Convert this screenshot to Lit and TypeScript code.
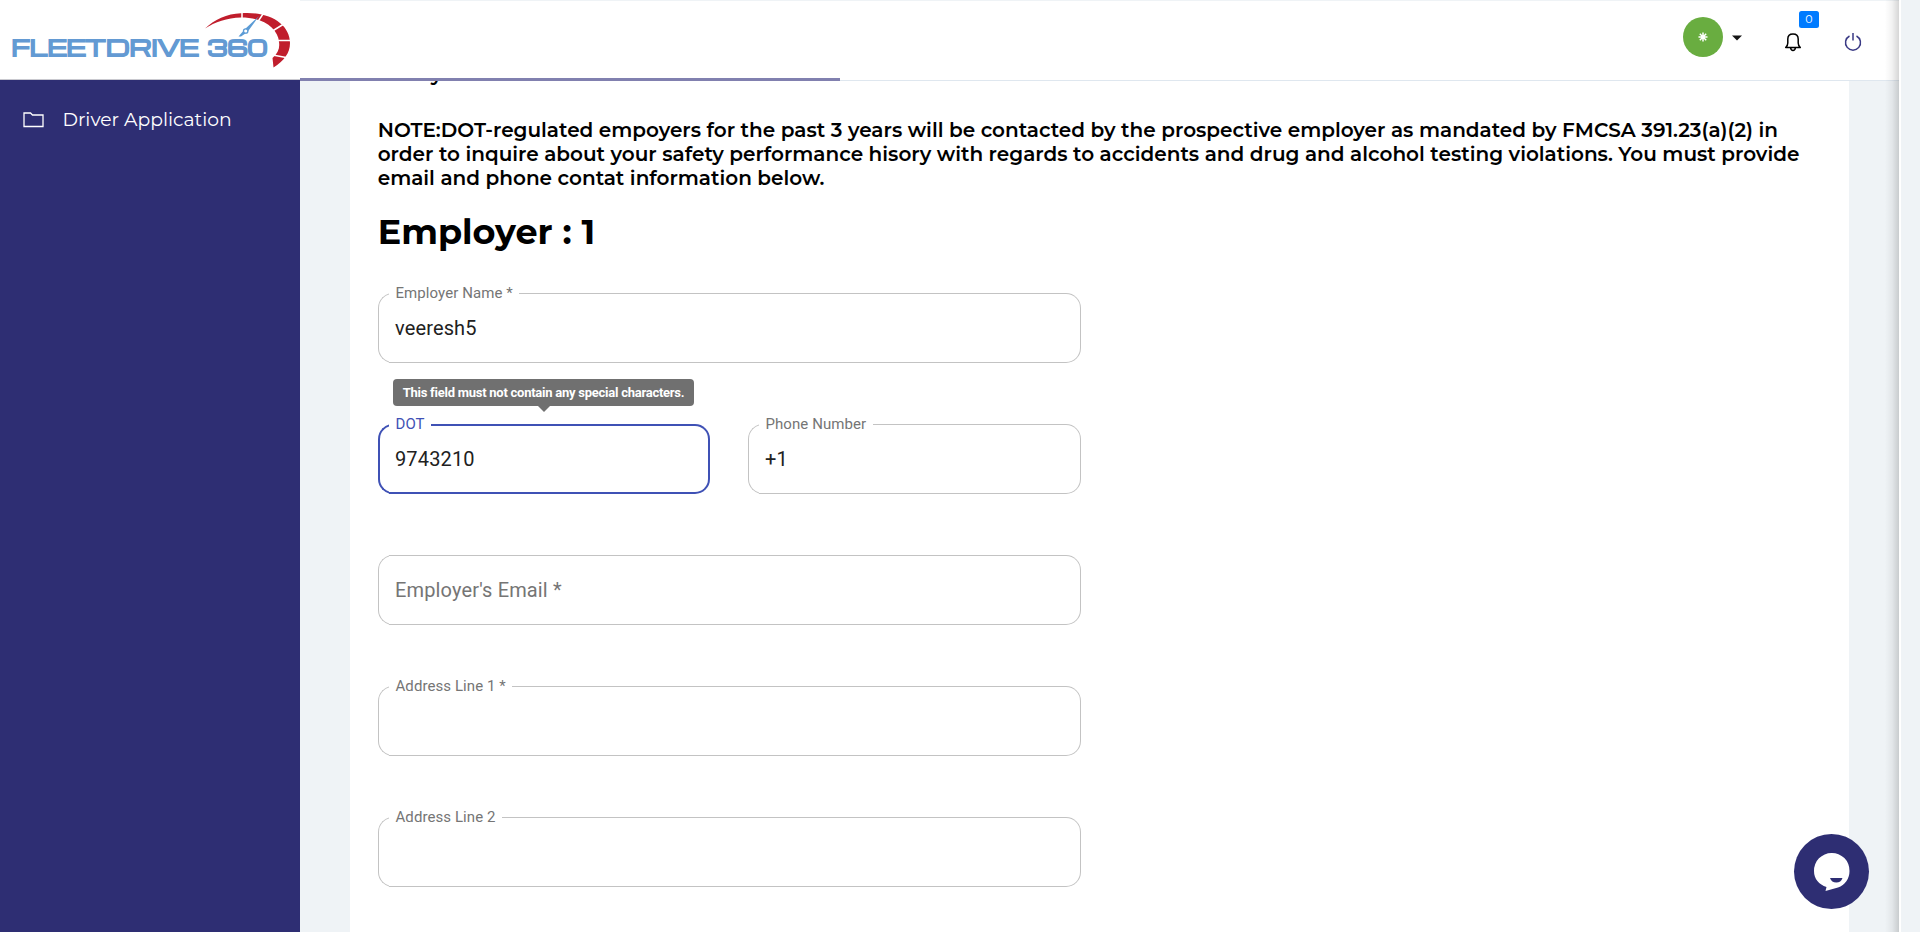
import { LitElement, html, svg, css, nothing } from "lit";
import { customElement, property } from "lit/decorators.js";
import { classMap } from "lit/directives/class-map.js";

@customElement("form-field")
class FormField extends LitElement {
  @property() label = "";
  @property() value = "";
  @property({ type: Boolean }) floating = false;
  @property({ type: Boolean }) active = false;
  @property() hint = "";
  static styles = css`
    :host { display: block; position: relative; font-family: Roboto, sans-serif; }
    .outline { display: grid; grid-template-columns: 11px auto 1fr; height: 70px; --c: #c3c3c3; --w: 1px; }
    .outline.active { --c: #3f51b5; --w: 2px; }
    .start, .gap, .end { border: var(--w) solid var(--c); box-sizing: border-box; height: 70px; }
    .start { border-right: 0; border-radius: 15px 0 0 15px; width: 17px; margin-right: -6px; clip-path: inset(0 6px 0 0); }
    .gap { border-left: 0; border-right: 0; padding: 0 6.500px 0 6.500px; font-size: 15px; line-height: 18px; color: #757575; white-space: nowrap; letter-spacing: 0.08px; }
    .floating .gap { border-top-color: transparent; }
    .gap span { display: block; margin-top: -10px; }
    .active .gap { color: #3f51b5; }
    .active .gap span { margin-top: -11px; }
    .end { border-left: 0; border-radius: 0 15px 15px 0; }
    .value { position: absolute; left: 17px; top: 23px; font-size: 20px; line-height: 24px; letter-spacing: 0.14px; color: #212121; white-space: nowrap; }
    .value.placeholder { color: #757575; }
    .tip { position: absolute; left: 15px; top: -45px; width: 301px; height: 27px; box-sizing: border-box; border-radius: 4px; background: #707070; color: #fff; font-size: 13px; font-weight: 700; line-height: 27px; text-align: center; letter-spacing: -0.25px; white-space: nowrap; }
    .tip::after { content: ""; position: absolute; left: 145px; top: 27px; border: 6px solid transparent; border-top-color: #707070; border-bottom: 0; }
  `;
  render() {
    return html`
      <div class=${classMap({ outline: true, active: this.active, floating: this.floating })}>
        <div class="start"></div>
        <div class="gap">${this.floating ? html`<span>${this.label}</span>` : nothing}</div>
        <div class="end"></div>
      </div>
      <div class=${classMap({ value: true, placeholder: !this.floating })}>${this.floating ? this.value : this.label}</div>
      ${this.hint ? html`<div class="tip">${this.hint}</div>` : nothing}
    `;
  }
}

const logo = svg`
  <svg class="logo" width="300" height="79" viewBox="0 0 300 79">
    <text x="11.500" y="55.500" textLength="187" lengthAdjust="spacingAndGlyphs">FLEETDRIVE</text>
    <text x="207.500" y="55.500" textLength="60" lengthAdjust="spacingAndGlyphs">360</text>
    <path fill="#c01d2c" d="M205 28.500C214 20 227 13.500 241 13.200C269 11 290 24 290 43C290 53 284 61 273.500 67.500L272.500 58C278 53 280 48 279 42C278 29 264 17.500 241 17.500C227 18 215 22 205 28.500Z"/>
    <path stroke="#fff" stroke-width="1.500" d="M242 12V20M263 14L255 26M283 24.500L270 32.500M292 40.500H274M286 57.500L270 54.500"/>
    <path fill="#5b9bd5" d="M259 16L247.500 32L241 36.500H238.500L244.500 29.500Z"/>
    <circle cx="245.700" cy="31" r="2.200" fill="#fff" stroke="#5b9bd5" stroke-width="1.300"/>
  </svg>`;

@customElement("app-root")
class AppRoot extends LitElement {
  static styles = css`
    :host { display: flex; position: relative; width: 1920px; height: 932px; overflow: hidden; background: #eff3f6; font-family: Montserrat, Inter, sans-serif; }
    .side { width: 300px; display: flex; flex-direction: column; background: #2e2e73; }
    .brand { height: 79px; background: #fff; border-bottom: 1px solid #c9c9cf; }
    .logo { display: block; }
    .logo text { font: 700 20.500px Michroma, Orbitron, Montserrat, Inter, sans-serif; fill: #639ad3; stroke: #639ad3; stroke-width: 1.200; }
    .nav { display: flex; align-items: center; gap: 19px; padding: 27px 22.500px; color: #fff; font-size: 18.750px; line-height: 25px; }
    .main { width: 1599px; display: flex; flex-direction: column; position: relative; border-right: 2px solid #fff; }
    .head { height: 79px; margin-top: 1px; background: #fff; border-bottom: 1px solid #dfe7ef; display: flex; justify-content: flex-end; position: relative; }
    .bar { position: absolute; left: 0; top: 77px; width: 540px; height: 3px; background: #8180af; }
    .tools { display: flex; align-items: flex-start; padding: 16px 37px 0 0; }
    .avatar { width: 40px; height: 40px; border-radius: 50%; background: #69ad40; display: grid; place-items: center; }
    .caret { margin: 18px 0 0 9px; }
    .bell { margin: 15px 0 0 42px; position: relative; width: 18px; height: 20px; }
    .count { position: absolute; left: 15px; top: -21px; width: 20px; height: 17px; border-radius: 2.500px; background: #007bff; color: #fff; font-size: 11px; line-height: 17px; text-align: center; }
    .power { margin: 15px 0 0 42px; }
    svg { display: block; }
    .card { margin: 0 50px; flex: 1; width: 1499px; box-sizing: border-box; padding: 0 28px 0 27.700px; background: #fff; color: #000; overflow: hidden; }
    .prev { height: 24px; margin-top: -19px; padding-left: 53px; font-size: 20px; line-height: 24px; font-weight: 600; }
    .note { margin-top: 32px; font-size: 20px; font-weight: 600; line-height: 24px; white-space: nowrap; }
    h1 { margin: 20px 0 0; font-size: 35px; line-height: 44px; font-weight: 700; white-space: nowrap; }
    .form { width: 703px; margin: 39px 0 0 0.300px; display: flex; flex-direction: column; gap: 61px; }
    .row { display: grid; grid-template-columns: 332px 333px; gap: 38px; }
    .shade { position: absolute; right: 0; top: 0; width: 14px; height: 932px; background: linear-gradient(to left, rgba(0,0,0,.16), rgba(0,0,0,.05) 50%, rgba(0,0,0,0)); }
    .chat { position: absolute; left: 1794px; top: 834px; width: 75px; height: 75px; border-radius: 50%; background: #2e2e73; }
  `;
  render() {
    return html`
      <aside class="side">
        <div class="brand">${logo}</div>
        <div class="nav">
          <svg width="21" height="16" viewBox="0 0 21 16" fill="none" stroke="#fff" stroke-width="1.300"><path d="M1 14.500V1H7.500L9.500 3H20V14.500Z"/></svg>
          <span>Driver Application</span>
        </div>
      </aside>
      <main class="main">
        <header class="head">
          <div class="tools">
            <div class="avatar"><svg width="10" height="10" viewBox="-5 -5 10 10" stroke="#fff" stroke-width="1.500"><path d="M0-4.500V4.500M-4.500 0H4.500M-3.200-3.200L3.200 3.200M3.200-3.200L-3.200 3.200"/></svg></div>
            <svg class="caret" width="10" height="6" viewBox="0 0 10 6"><path fill="#151515" d="M0 0.500H10L5 5.500Z"/></svg>
            <div class="bell">
              <svg width="18" height="20" viewBox="0 0 18 20" fill="none" stroke="#000" stroke-width="1.500" stroke-linejoin="round"><path d="M1.700 15.500Q3.800 13.500 3.800 11V7Q3.800 2 9 2T14.200 7V11Q14.200 13.500 16.300 15.500ZM6.500 15.700Q7 18.500 9 18.500T11.500 15.700"/></svg>
              <span class="count">0</span>
            </div>
            <svg class="power" width="18" height="20" viewBox="0 0 18 20" fill="none" stroke="#3a3a85" stroke-width="1.500"><path d="M9 1V8.500M5.500 4A7.500 7.500 0 1 0 12.500 4"/></svg>
          </div>
          <div class="bar"></div>
        </header>
        <section class="card">
          <div class="prev">y</div>
          <div class="note">
            <div>NOTE:DOT-regulated empoyers for the past 3 years will be contacted by the prospective employer as mandated by FMCSA 391.23(a)(2) in</div>
            <div>order to inquire about your safety performance hisory with regards to accidents and drug and alcohol testing violations. You must provide</div>
            <div>email and phone contat information below.</div>
          </div>
          <h1>Employer : 1</h1>
          <div class="form">
            <form-field label="Employer Name *" value="veeresh5" floating></form-field>
            <div class="row">
              <form-field label="DOT" value="9743210" floating active hint="This field must not contain any special characters."></form-field>
              <form-field label="Phone Number" value="+1" floating></form-field>
            </div>
            <form-field label="Employer's Email *"></form-field>
            <form-field label="Address Line 1 *" floating></form-field>
            <form-field label="Address Line 2" floating></form-field>
          </div>
        </section>
        <div class="shade"></div>
      </main>
      <div class="chat">
        <svg width="75" height="75" viewBox="0 0 75 75"><path fill="#fff" d="M37.500 19A17.500 17.500 0 0 1 55.500 37C55.500 45 51 51 44 53.500L31.500 57L32.500 53C25 50.500 20 45 20 37A17.500 17.500 0 0 1 37.500 19Z"/><path fill="#2e2e73" d="M36 44H48.500Q47 48.500 42.300 48.500T36 44Z"/></svg>
      </div>
    `;
  }
}
